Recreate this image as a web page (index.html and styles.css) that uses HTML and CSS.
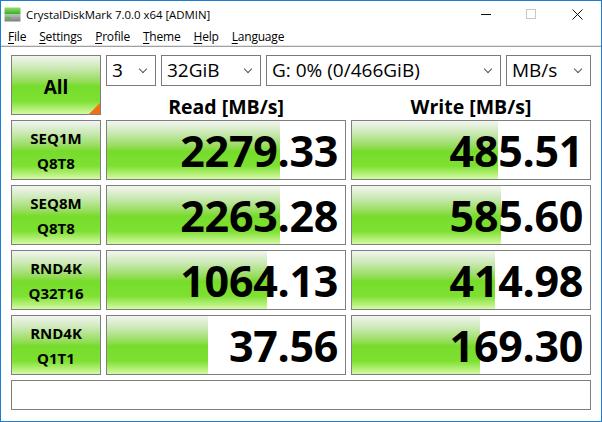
FILE: index.html
```html
<!DOCTYPE html>
<html lang="en">
<head>
<meta charset="utf-8">
<title>CrystalDiskMark 7.0.0 x64 [ADMIN]</title>
<link rel="stylesheet" href="styles.css">
</head>
<body>
<div class="window">
  <header class="titlebar">
    <svg class="app-icon" width="17" height="15" viewBox="0 0 17 15">
      <defs>
        <linearGradient id="top" x1="0" y1="0" x2="0" y2="1">
          <stop offset="0" stop-color="#8fe06a"/>
          <stop offset="1" stop-color="#3aa62c"/>
        </linearGradient>
        <linearGradient id="base" x1="0" y1="0" x2="0" y2="1">
          <stop offset="0" stop-color="#b9b9b9"/>
          <stop offset="1" stop-color="#7d7d7d"/>
        </linearGradient>
      </defs>
      <rect x="0.5" y="0.5" width="16" height="7" fill="url(#top)"/>
      <rect x="0.5" y="8" width="16" height="6.5" fill="url(#base)"/>
      <rect x="2" y="10" width="5" height="2" fill="#56c33a"/>
    </svg>
    <span class="title">CrystalDiskMark 7.0.0 x64 [ADMIN]</span>
    <div class="controls">
      <span class="ctl ctl-min"></span>
      <span class="ctl ctl-max"></span>
      <svg class="ctl-close" width="11" height="11" viewBox="0 0 11 11">
        <path d="M0.5 0.5 L10.5 10.5 M10.5 0.5 L0.5 10.5" stroke="#111" stroke-width="1"/>
      </svg>
    </div>
  </header>

  <nav class="menubar">
    <span class="menu"><u>F</u>ile</span>
    <span class="menu"><u>S</u>ettings</span>
    <span class="menu"><u>P</u>rofile</span>
    <span class="menu"><u>T</u>heme</span>
    <span class="menu"><u>H</u>elp</span>
    <span class="menu"><u>L</u>anguage</span>
  </nav>

  <main class="panel">
    <div class="top">
      <button class="all">All<span class="corner"></span></button>
      <div class="top-right">
        <div class="selects">
          <div class="select w-count">3<span class="chev"></span></div>
          <div class="select w-size">32GiB<span class="chev"></span></div>
          <div class="select w-drive">G: 0% (0/466GiB)<span class="chev"></span></div>
          <div class="select w-unit">MB/s<span class="chev"></span></div>
        </div>
        <div class="heads">
          <div class="head">Read [MB/s]</div>
          <div class="head">Write [MB/s]</div>
        </div>
      </div>
    </div>

    <div class="row">
      <div class="label"><span>SEQ1M</span><span>Q8T8</span></div>
      <div class="cell"><div class="bar" style="width:173px"></div><span class="num">2279.33</span></div>
      <div class="cell"><div class="bar" style="width:146px"></div><span class="num">485.51</span></div>
    </div>
    <div class="row">
      <div class="label"><span>SEQ8M</span><span>Q8T8</span></div>
      <div class="cell"><div class="bar" style="width:173px"></div><span class="num">2263.28</span></div>
      <div class="cell"><div class="bar" style="width:149px"></div><span class="num">585.60</span></div>
    </div>
    <div class="row">
      <div class="label"><span>RND4K</span><span>Q32T16</span></div>
      <div class="cell"><div class="bar" style="width:160px"></div><span class="num">1064.13</span></div>
      <div class="cell"><div class="bar" style="width:143px"></div><span class="num">414.98</span></div>
    </div>
    <div class="row">
      <div class="label"><span>RND4K</span><span>Q1T1</span></div>
      <div class="cell"><div class="bar" style="width:101px"></div><span class="num">37.56</span></div>
      <div class="cell"><div class="bar" style="width:128px"></div><span class="num">169.30</span></div>
    </div>

    <div class="status"></div>
  </main>
</div>
</body>
</html>
```

FILE: styles.css
```css
* { box-sizing: border-box; }

html, body {
  margin: 0;
  padding: 0;
  background: #fff;
}

.window {
  width: 602px;
  height: 422px;
  border: 1px solid #1a7fd4;
  background: #fff;
  font-family: "Open Sans", "Noto Sans", sans-serif;
  color: #000;
  overflow: hidden;
}

/* title bar */
.titlebar {
  height: 29px;
  display: flex;
  align-items: center;
}
.app-icon {
  margin-left: 3px;
  margin-top: -2px;
}
.title {
  margin-left: 5px;
  font-size: 11.4px;
  margin-top: -3px;
}
.controls {
  margin-left: auto;
  display: flex;
  align-items: center;
  height: 100%;
  margin-top: -3px;
}
.ctl { display: block; }
.ctl-min {
  width: 10px;
  height: 1px;
  background: #111;
  margin-right: 35px;
}
.ctl-max {
  width: 10px;
  height: 10px;
  border: 1px solid #c8c8c8;
  margin-right: 36px;
}
.ctl-close { margin-right: 18px; }

/* menu bar */
.menubar {
  height: 16px;
  display: flex;
  align-items: center;
  padding-left: 7px;
  font-size: 12px;
  border-bottom: 1px solid #e6e6e6;
}
.menu {
  margin-right: 13px;
  letter-spacing: -0.2px;
  line-height: 16px;
  margin-top: -2px;
}
.menu u { text-decoration-thickness: 1px; text-underline-offset: 2px; }

/* main panel */
.panel {
  border-top: 1px solid #a0a0a0;
  padding: 8px 10px 0 10px;
}

.top {
  display: flex;
  gap: 5px;
  height: 60px;
}
.all {
  position: relative;
  width: 90px;
  height: 60px;
  border: 1px solid #7f7f7f;
  padding: 4px 0 0 0;
  font-family: inherit;
  font-weight: 700;
  font-size: 19px;
  color: #000;
  background: linear-gradient(to bottom, #f3f5f1 0%, #c8e8b0 22%, #92dc54 45%, #76dc2a 52%, #7ee132 78%, #d6f9a6 100%);
}
.corner {
  position: absolute;
  right: 0;
  bottom: 0;
  width: 0;
  height: 0;
  border-left: 11px solid transparent;
  border-bottom: 11px solid #f37010;
}

.top-right {
  display: flex;
  flex-direction: column;
  width: 485px;
}
.selects {
  display: flex;
  gap: 5px;
  height: 31px;
}
.select {
  position: relative;
  height: 31px;
  border: 1px solid #7a7a7a;
  font-size: 19px;
  line-height: 28px;
  padding-left: 5px;
  background: #fff;
}
.w-count { width: 50px; }
.w-size { width: 100px; }
.w-drive { width: 235px; }
.w-unit { width: 85px; }
.chev {
  position: absolute;
  right: 9px;
  top: 10px;
  width: 6px;
  height: 6px;
  border-right: 1px solid #555;
  border-bottom: 1px solid #555;
  transform: rotate(45deg);
}

.heads {
  display: flex;
  gap: 5px;
  height: 29px;
}
.head {
  width: 240px;
  text-align: center;
  font-weight: 700;
  font-size: 19.5px;
  line-height: 29px;
  padding-top: 6px;
}

/* result rows */
.row {
  display: flex;
  gap: 5px;
  height: 60px;
  margin-top: 5px;
}
.label {
  width: 90px;
  border: 1px solid #7f7f7f;
  display: flex;
  flex-direction: column;
  align-items: center;
  justify-content: center;
  gap: 5px;
  font-weight: 700;
  font-size: 15px;
  line-height: 20px;
  padding-top: 1px;
  background: linear-gradient(to bottom, #f3f5f1 0%, #c8e8b0 22%, #92dc54 45%, #76dc2a 52%, #7ee132 78%, #d6f9a6 100%);
}
.cell {
  position: relative;
  width: 240px;
  border: 1px solid #7f7f7f;
  display: flex;
  align-items: center;
  justify-content: flex-end;
  padding-right: 7px;
  background: #fff;
}
.bar {
  position: absolute;
  left: 0;
  top: 0;
  bottom: 0;
  background: linear-gradient(to bottom, #f3f5f1 0%, #c8e8b0 22%, #92dc54 45%, #76dc2a 52%, #7ee132 78%, #d6f9a6 100%);
}
.num {
  position: relative;
  font-weight: 700;
  font-size: 43px;
  line-height: 50px;
  letter-spacing: -0.3px;
  padding-top: 2px;
}

.status {
  margin-top: 5px;
  height: 30px;
  width: 580px;
  border: 1px solid #7f7f7f;
}
```
